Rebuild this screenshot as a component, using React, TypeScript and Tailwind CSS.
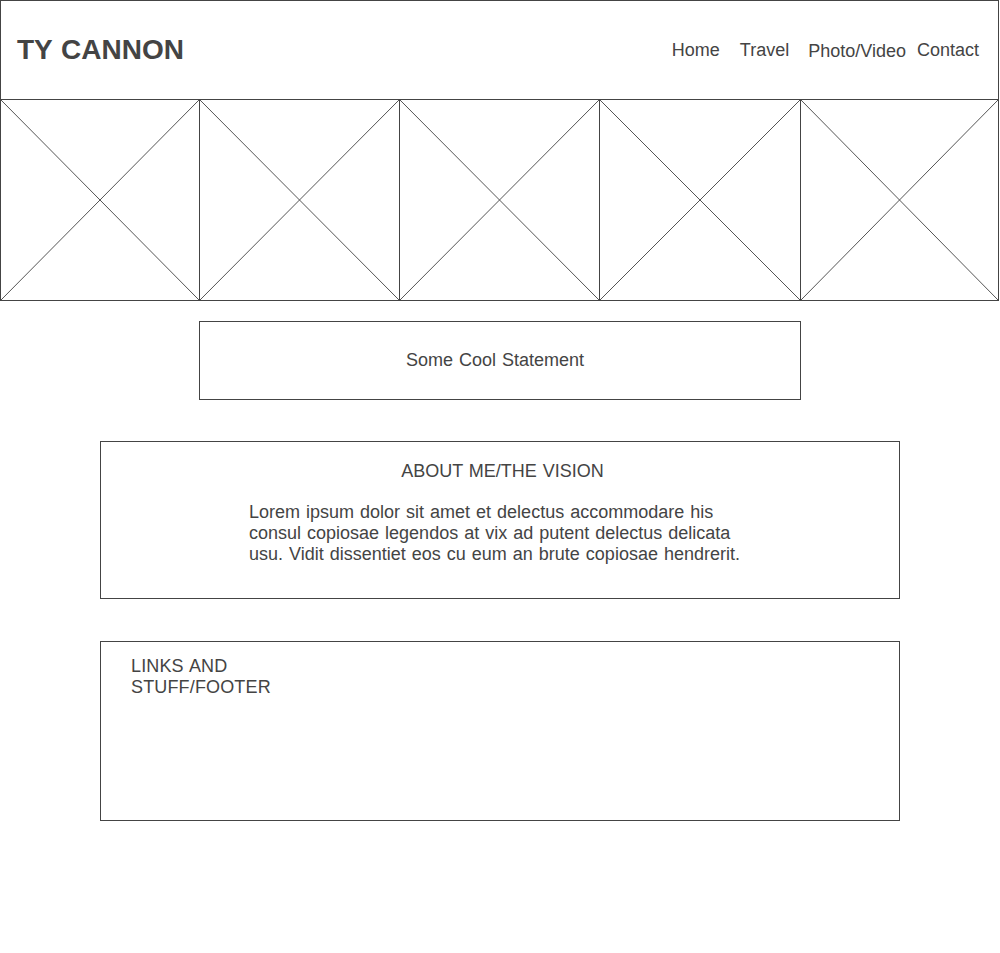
import React from "react";

const Ph = ({ w, first }: { w: number; first?: boolean }) => (
  <div
    className={`h-[202px] border border-[#444] shrink-0 ${first ? "" : "-ml-px"}`}
    style={{ width: w }}
  >
    <svg className="block w-full h-full" viewBox="0 0 100 100" preserveAspectRatio="none">
      <line x1="0" y1="0" x2="100" y2="100" stroke="#555" strokeWidth="1" vectorEffect="non-scaling-stroke" />
      <line x1="100" y1="0" x2="0" y2="100" stroke="#555" strokeWidth="1" vectorEffect="non-scaling-stroke" />
    </svg>
  </div>
);

export default function App() {
  return (
    <div
      className="w-[1000px] min-h-[953px] bg-white text-[#444] [word-spacing:1px]"
      style={{ fontFamily: '"Liberation Sans", Arial, sans-serif' }}
    >
      <header className="w-[999px] h-[100px] border border-[#444] flex items-center pl-[16px] pr-[19px]">
        <div className="text-[28px] font-bold leading-none">TY CANNON</div>
        <nav className="ml-auto flex items-center text-[18px] leading-[21px]">
          <span>Home</span>
          <span className="ml-[20px]">Travel</span>
          <span className="ml-[19px] mt-[2px]">Photo/Video</span>
          <span className="ml-[11px]">Contact</span>
        </nav>
      </header>

      <div className="flex -mt-px">
        <Ph w={200} first />
        <Ph w={201} />
        <Ph w={201} />
        <Ph w={202} />
        <Ph w={199} />
      </div>

      <div className="mt-[20px] ml-[199px] w-[602px] h-[79px] border border-[#444] flex items-center justify-center pr-[10px] text-[18px] leading-[21px]">
        Some Cool Statement
      </div>

      <section className="mt-[41px] ml-[100px] w-[800px] h-[158px] border border-[#444] pt-[19px]">
        <div className="text-center text-[18px] leading-[21px] pl-[5px]">ABOUT ME/THE VISION</div>
        <p className="mt-[20px] ml-[148px] w-[500px] text-[18px] leading-[21px]">
          Lorem ipsum dolor sit amet et delectus accommodare his consul copiosae legendos at vix ad putent delectus delicata usu. Vidit dissentiet eos cu eum an brute copiosae hendrerit.
        </p>
      </section>

      <footer className="mt-[42px] ml-[100px] w-[800px] h-[180px] border border-[#444] pt-[14px] pl-[30px]">
        <div className="w-[150px] text-[18px] leading-[21px] tracking-[0.15px]">LINKS AND STUFF/FOOTER</div>
      </footer>
    </div>
  );
}
